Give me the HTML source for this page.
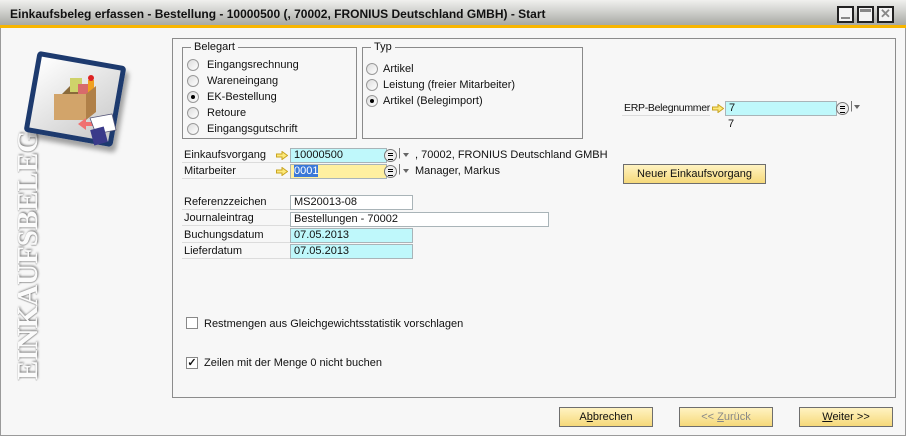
<!DOCTYPE html>
<html><head><meta charset="utf-8">
<style>
*{margin:0;padding:0;box-sizing:border-box}
body{width:906px;height:436px;overflow:hidden;background:#f7f7f7;font-family:"Liberation Sans",Tahoma,sans-serif;font-size:11px;color:#111;position:relative}
.a{position:absolute;white-space:nowrap}
.win{position:absolute;left:0;top:0;width:906px;height:436px;border:1px solid #9a9a9a;border-top:none}
.title{position:absolute;left:0;top:0;width:906px;height:28px;background:linear-gradient(#f0f0ee,#d4d5d2 40%,#a7a9a3);border-bottom:3px solid #f7b500}
.title span{position:absolute;left:10px;top:7px;font-weight:bold;font-size:12px;color:#111}
.wb{position:absolute;top:6px;width:17px;height:17px;border:2px solid #222;background:#f4f4f4}
.box{position:absolute;border:1px solid #8c8c8c}
.grp{position:absolute;border:1px solid #8a8a8a}
.grp b{position:absolute;top:-7px;left:8px;background:#f7f7f7;padding:0 3px;font-weight:normal}
.rad{position:absolute;width:12px;height:12px;border-radius:50%;border:1px solid #9a9a9a;background:linear-gradient(135deg,#ddd,#fff)}
.rad.on::after{content:"";position:absolute;left:3px;top:3px;width:4px;height:4px;border-radius:50%;background:#000}
.lbl{position:absolute;border-bottom:1px solid #dcdcdc;height:15px;line-height:14px;padding-left:2px;white-space:nowrap}
.inp{position:absolute;height:15px;border:1px solid #a9b4b8;background:#fff;line-height:13px;padding-left:3px;white-space:nowrap}
.cy{background:#bff8fb}
.ye{background:#fff0a0}
.arr{position:absolute;width:12px;height:9px}
.lb{position:absolute;width:13px;height:13px;border-radius:50%;border:1px solid #777;background:#eee}
.lb::before{content:"";position:absolute;left:3px;top:3px;width:5px;height:5px;border-top:1px solid #000;border-bottom:1px solid #000}
.lb::after{content:"";position:absolute;left:3px;top:5px;width:5px;height:1px;background:#000}
.dd{position:absolute;width:0;height:0;border-left:3px solid transparent;border-right:3px solid transparent;border-top:4px solid #666}
.btn{position:absolute;height:20px;border:1px solid #6e6e6e;background:linear-gradient(#fff3c2,#f6d97a);text-align:center;line-height:18px;white-space:nowrap}
.chk{position:absolute;width:12px;height:12px;border:1px solid #888;background:#fff}
</style></head><body>
<div class="win"></div>
<div class="title"><span>Einkaufsbeleg erfassen - Bestellung - 10000500 (, 70002, FRONIUS Deutschland GMBH) - Start</span>
<div class="wb" style="left:837px"><div style="position:absolute;left:2px;bottom:2px;width:9px;height:2px;background:#888"></div></div>
<div class="wb" style="left:857px"><div style="position:absolute;left:1px;top:1px;width:11px;height:3px;background:#888"></div></div>
<div class="wb" style="left:877px;color:#888;font-weight:bold;font-size:13px;line-height:12px;text-align:center">✕</div>
</div>

<div class="a" style="left:16px;top:380px;transform:rotate(-90deg);transform-origin:0 0;font-family:'Liberation Serif',serif;font-weight:bold;font-size:29px;line-height:24px;color:#fbfbfb;text-shadow:1px 1px 2px #777,-1px 0 1px #aaa">EINKAUFSBELEG</div>
<div class="a" style="left:30px;top:58px;width:90px;height:82px;transform:rotate(10deg);border:5px solid #1d3a6e;border-radius:4px;background:linear-gradient(135deg,#fff,#c8c8c8);box-shadow:4px 5px 5px rgba(0,0,0,.35)"></div>
<svg class="a" style="left:50px;top:72px" width="70" height="75" viewBox="0 0 70 75">
<polygon points="12,22 38,22 44,14 20,14" fill="#8a6a3a"/>
<rect x="20" y="6" width="12" height="14" fill="#cfd26a"/>
<rect x="28" y="12" width="10" height="12" fill="#d86b6b"/>
<rect x="38" y="8" width="6" height="16" fill="#f0a020"/><circle cx="41" cy="6" r="3" fill="#d22"/>
<polygon points="4,22 36,22 36,48 4,48" fill="#d2a46a"/>
<polygon points="36,22 46,14 46,40 36,48" fill="#b08048"/>
<polygon points="28,52 36,46 36,50 44,50 44,54 36,54 36,58" fill="#f07070"/>
<polygon points="40,46 62,42 66,58 46,62" fill="#fff" stroke="#557" stroke-width=".8"/>
<rect x="42" y="56" width="14" height="16" transform="rotate(-15 49 64)" fill="#3a3a8a"/>
</svg>

<div class="box" style="left:172px;top:38px;width:724px;height:360px"></div>

<div class="grp" style="left:182px;top:47px;width:175px;height:92px"><b>Belegart</b></div>
<div class="rad" style="left:187px;top:59px"></div><div class="a" style="left:207px;top:59px">Eingangsrechnung</div>
<div class="rad" style="left:187px;top:75px"></div><div class="a" style="left:207px;top:75px">Wareneingang</div>
<div class="rad on" style="left:187px;top:91px"></div><div class="a" style="left:207px;top:91px">EK-Bestellung</div>
<div class="rad" style="left:187px;top:107px"></div><div class="a" style="left:207px;top:107px">Retoure</div>
<div class="rad" style="left:187px;top:123px"></div><div class="a" style="left:207px;top:123px">Eingangsgutschrift</div>

<div class="grp" style="left:362px;top:47px;width:221px;height:92px"><b>Typ</b></div>
<div class="rad" style="left:366px;top:63px"></div><div class="a" style="left:383px;top:63px">Artikel</div>
<div class="rad" style="left:366px;top:79px"></div><div class="a" style="left:383px;top:79px">Leistung (freier Mitarbeiter)</div>
<div class="rad on" style="left:366px;top:95px"></div><div class="a" style="left:383px;top:95px">Artikel (Belegimport)</div>

<svg width="0" height="0" style="position:absolute"><defs><symbol id="ar" viewBox="0 0 12 9"><polygon points="0.5,3 6,3 6,0.5 11.5,4.5 6,8.5 6,6 0.5,6" fill="#fde97a" stroke="#c9a420" stroke-width="1"/></symbol></defs></svg>

<div class="lbl" style="left:182px;top:148px;width:108px">Einkaufsvorgang</div>
<svg class="arr" style="left:276px;top:151px"><use href="#ar"/></svg>
<div class="inp cy" style="left:290px;top:148px;width:97px">10000500</div>
<div class="lb" style="left:384px;top:149px"></div><div class="a" style="left:398px;top:147px;color:#666">|</div><div class="dd" style="left:403px;top:153px"></div>
<div class="a" style="left:415px;top:149px">, 70002, FRONIUS Deutschland GMBH</div>

<div class="lbl" style="left:182px;top:164px;width:108px">Mitarbeiter</div>
<svg class="arr" style="left:276px;top:167px"><use href="#ar"/></svg>
<div class="inp ye" style="left:290px;top:164px;width:97px"><span style="background:#3a78d8;color:#fff">0001</span></div>
<div class="lb" style="left:384px;top:165px"></div><div class="a" style="left:398px;top:163px;color:#666">|</div><div class="dd" style="left:403px;top:169px"></div>
<div class="a" style="left:415px;top:165px">Manager, Markus</div>

<div class="lbl" style="left:622px;top:101px;width:88px;font-size:10.5px;letter-spacing:-0.3px">ERP-Belegnummer</div>
<svg class="arr" style="left:712px;top:104px"><use href="#ar"/></svg>
<div class="inp cy" style="left:725px;top:101px;width:112px">7</div>
<div class="lb" style="left:836px;top:102px"></div><div class="a" style="left:850px;top:100px;color:#666">|</div><div class="dd" style="left:854px;top:105px"></div>
<div class="a" style="left:728px;top:118px">7</div>

<div class="btn" style="left:623px;top:164px;width:143px">Neuer Einkaufsvorgang</div>

<div class="lbl" style="left:182px;top:195px;width:108px">Referenzzeichen</div>
<div class="inp" style="left:290px;top:195px;width:123px">MS20013-08</div>
<div class="lbl" style="left:182px;top:211px;width:108px">Journaleintrag</div>
<div class="inp" style="left:290px;top:212px;width:259px">Bestellungen - 70002</div>
<div class="lbl" style="left:182px;top:228px;width:108px">Buchungsdatum</div>
<div class="inp cy" style="left:290px;top:228px;width:123px">07.05.2013</div>
<div class="lbl" style="left:182px;top:244px;width:108px">Lieferdatum</div>
<div class="inp cy" style="left:290px;top:244px;width:123px">07.05.2013</div>

<div class="chk" style="left:186px;top:317px"></div>
<div class="a" style="left:204px;top:318px">Restmengen aus Gleichgewichtsstatistik vorschlagen</div>
<div class="chk" style="left:186px;top:357px;font-size:11px;line-height:10px;text-align:center;font-weight:bold">✓</div>
<div class="a" style="left:204px;top:357px">Zeilen mit der Menge 0 nicht buchen</div>

<div class="btn" style="left:559px;top:407px;width:94px">A<u>b</u>brechen</div>
<div class="btn" style="left:679px;top:407px;width:94px;color:#888">&lt;&lt; <u>Z</u>urück</div>
<div class="btn" style="left:799px;top:407px;width:94px"><u>W</u>eiter &gt;&gt;</div>
</body></html>
